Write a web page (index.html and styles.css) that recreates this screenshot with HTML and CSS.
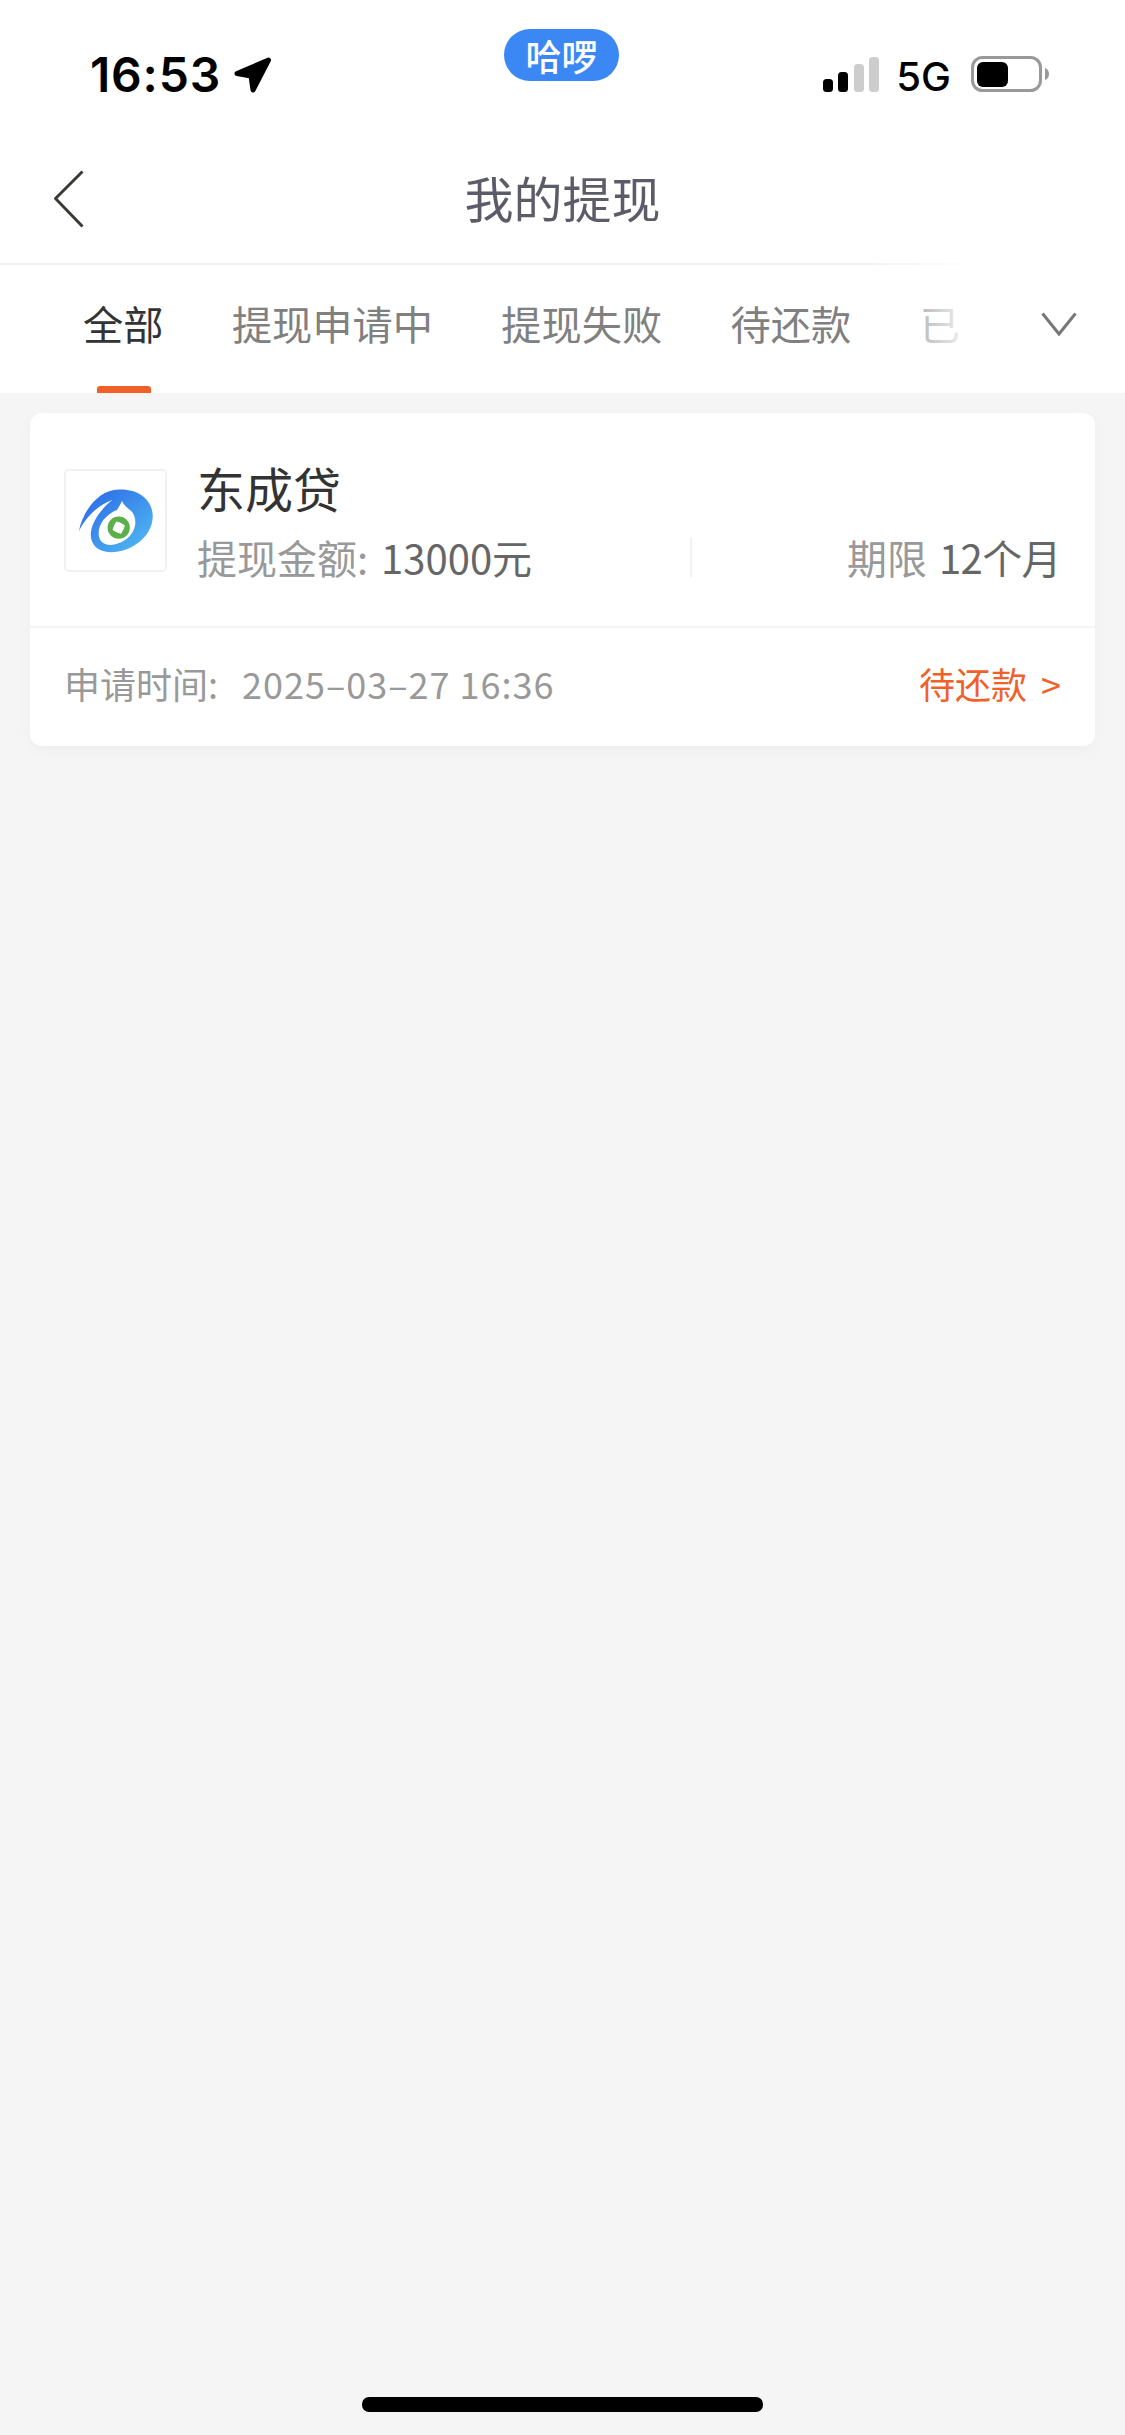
FILE: index.html
```html
<!DOCTYPE html>
<html lang="zh-CN">
<head>
<meta charset="utf-8">
<title>我的提现</title>
<link rel="stylesheet" href="styles.css">
</head>
<body>
<div class="page">
  <header class="status">
    <div class="status-left">
      <span class="time">16:53</span>
      <svg class="loc" viewBox="0 0 38 36"><path d="M3 16.500 34.500 3 19 33 17 19Z"/></svg>
    </div>
    <div class="pill">哈啰</div>
    <div class="status-right">
      <svg class="signal" viewBox="0 0 56 35">
        <rect x="0" y="22" width="10" height="13" rx="3.500"/>
        <rect x="15" y="15" width="10" height="20" rx="3.500"/>
        <rect class="off" x="31" y="7" width="10" height="28" rx="3.500"/>
        <rect class="off" x="46" y="0" width="10" height="35" rx="3.500"/>
      </svg>
      <span class="net">5G</span>
      <svg class="batt" viewBox="0 0 78 36">
        <rect class="batt-shell" x="1.500" y="1.500" width="68" height="33" rx="10"/>
        <rect x="6" y="6" width="31" height="25" rx="6"/>
        <path class="batt-nub" d="M74 12c3 1 4 3.500 4 6s-1 5-4 6z"/>
      </svg>
    </div>
  </header>

  <nav class="nav">
    <div class="nav-side">
      <svg class="back" viewBox="0 0 30 58"><path d="M28.500 1.500 1.500 28.500 28.500 56.500"/></svg>
    </div>
    <h1 class="nav-title">我的提现</h1>
    <div class="nav-side"></div>
  </nav>

  <div class="tabs">
    <div class="tab tab-active">全部</div>
    <div class="tab">提现申请中</div>
    <div class="tab">提现失败</div>
    <div class="tab">待还款</div>
    <div class="tab">已</div>
    <div class="tabs-fade">
      <svg class="more" viewBox="0 0 36 24"><path d="M1.500 1.500 18 22 34.500 1.500"/></svg>
    </div>
  </div>

  <main class="list">
    <article class="card">
      <div class="card-top">
        <div class="logo">
          <svg viewBox="42 42 306 306">
            <defs>
              <linearGradient id="lg" x1="0.1" y1="0.1" x2="0.9" y2="0.9">
                <stop offset="0" stop-color="#2c6be8"/>
                <stop offset="1" stop-color="#4fb6f0"/>
              </linearGradient>
            </defs>
            <path fill="url(#lg)" d="M82 228C92 170 140 100 205 99 270 96 312 135 310 185 308 245 245 293 180 293 135 293 112 262 120 225 126 195 150 160 185 132 135 150 100 190 82 228Z"/>
            <path fill="#fff" d="M144 245C138 212 160 180 200 162 205 155 210 145 215 135 222 150 234 158 246 168 264 192 258 228 232 250 200 276 152 280 144 245Z"/>
            <circle cx="205" cy="217" r="25" fill="none" stroke="#5cb04a" stroke-width="19"/>
            <rect x="190" y="202" width="30" height="30" rx="4" fill="#fff" transform="rotate(25 205 217)"/>
          </svg>
        </div>
        <div class="card-body">
          <div class="card-name">东成贷</div>
          <div class="card-info">
            <div class="info-amount"><span class="label">提现金额:</span> <span class="value amount-value">13000元</span></div>
            <div class="info-sep"></div>
            <div class="info-term"><span class="label">期限</span> <span class="value term-value">12个月</span></div>
          </div>
        </div>
      </div>
      <div class="card-foot">
        <div class="apply"><span>申请时间:</span><span class="apply-date">2025–03–27 16:36</span></div>
        <div class="state">待还款<span class="state-arrow">&gt;</span></div>
      </div>
    </article>
  </main>

  <div class="home"><div class="home-bar"></div></div>
</div>
</body>
</html>
```
FILE: styles.css
```css
* { box-sizing: border-box; }
html, body { margin: 0; padding: 0; }
body {
  font-family: "Noto Sans CJK SC", "Noto Sans", sans-serif;
  background: #f5f5f5;
}
.page {
  width: 1125px;
  height: 2435px;
  display: flex;
  flex-direction: column;
  overflow: hidden;
}
.status {
  height: 130px;
  background: #fff;
  display: grid;
  grid-template-columns: 1fr 115px 1fr;
  padding: 0 76px 0 90px;
  column-gap: 0;
}
.status-left { display: flex; align-items: center; gap: 13px; height: 150px; }
.time {
  font-family: Inter, sans-serif;
  font-weight: 600;
  font-size: 48px;
  line-height: 1;
  color: #000;
  letter-spacing: 0.8px;
}
.loc { width: 38px; height: 36px; }
.loc path { fill: #000; stroke: #000; stroke-width: 5; stroke-linejoin: round; }
.pill {
  margin: 29px 0 0 -8px;
  height: 52px;
  width: 115px;
  background: #3b88f5;
  border-radius: 26px;
  color: #fff;
  font-size: 36px;
  font-weight: 500;
  line-height: 52px;
  text-align: center;
}
.status-right {
  display: flex;
  justify-content: flex-end;
  align-items: flex-start;
  padding-top: 56px;
}
.signal { width: 56px; height: 35px; margin-top: 1px; fill: #000; }
.signal .off { fill: #cdcdcd; }
.net {
  font-family: Inter, sans-serif;
  font-weight: 500;
  font-size: 40px;
  line-height: 1;
  margin: 1px 20px 0 17px;
  color: #000;
}
.batt { width: 78px; height: 36px; fill: #000; }
.batt-shell { fill: none; stroke: #999; stroke-width: 3; }
.batt-nub { fill: #999; }

.nav {
  height: 135px;
  background: #fff;
  display: grid;
  grid-template-columns: 1fr auto 1fr;
  align-items: center;
  border-bottom: 2px solid #f2f2f3;
  padding: 0 0 0 54px;
}
.nav-side { display: flex; }
.back { width: 30px; height: 58px; margin-top: 5px; }
.back path { fill: none; stroke: #3a3a32; stroke-width: 3; }
.nav-title {
  margin: 0;
  font-size: 49px;
  font-weight: 400;
  line-height: 60px;
  color: #5c5c68;
  transform: translateX(-27px);
}

.tabs {
  position: relative;
  height: 128px;
  background: #fff;
  display: flex;
  gap: 68.5px;
  padding-left: 83px;
}
.tab {
  position: relative;
  font-size: 40.2px;
  line-height: 116px;
  color: #808080;
  white-space: nowrap;
}
.tab-active { color: #333; }
.tab-active::after {
  content: "";
  position: absolute;
  left: 14px;
  bottom: 0;
  width: 54px;
  height: 7px;
  border-radius: 3px 3px 0 0;
  background: #f0612a;
}
.tabs-fade {
  position: absolute;
  top: -2px;
  right: 0;
  bottom: 0;
  width: 255px;
  background: linear-gradient(to right, rgba(255,255,255,0), #fff 42%);
  display: flex;
  align-items: center;
  justify-content: flex-end;
  padding: 0 48px 8px 0;
}
.more { width: 36px; height: 24px; }
.more path { fill: none; stroke: #777; stroke-width: 3; }

.list { flex: 1; padding: 20px 30px 0; }
.card {
  height: 333px;
  background: #fff;
  border-radius: 12px;
  box-shadow: 0 4px 14px rgba(0,0,0,0.03);
  display: flex;
  flex-direction: column;
}
.card-top {
  height: 215px;
  display: flex;
  align-items: flex-start;
  padding: 44px 34px 0 34px;
  border-bottom: 2px solid #f5f5f5;
}
.logo {
  width: 103px;
  height: 103px;
  margin-top: 12px;
  border: 2px solid #f1f1f1;
  border-radius: 5px;
  background: #fff;
  flex: none;
}
.logo svg { display: block; width: 100%; height: 100%; }
.card-body { flex: 1; margin-left: 30px; }
.card-name { font-size: 48px; line-height: 60px; color: #333; }
.card-info {
  display: grid;
  grid-template-columns: 493px 2px 1fr;
  align-items: center;
  margin-top: 15px;
  font-size: 40px;
  line-height: 50px;
}
.label { color: #999; }
.value { color: #666; }
.amount-value { margin-left: 4px; }
.term-value { margin-left: 3px; letter-spacing: -0.6px; }
.info-sep { height: 40px; background: #f2f2f2; }
.info-term { text-align: right; }
.card-foot {
  flex: 1;
  display: flex;
  justify-content: space-between;
  align-items: center;
  padding: 0 34px 9px 34px;
  font-size: 36px;
  color: #999;
}
.apply-date { margin-left: 24px; letter-spacing: 1px; }
.state { color: #f0612a; }
.state-arrow { margin-left: 14px; }

.home { height: 36px; display: flex; justify-content: center; margin-bottom: 23px; align-items: flex-end; }
.home-bar { width: 401px; height: 15px; background: #000; border-radius: 7px; }
```
